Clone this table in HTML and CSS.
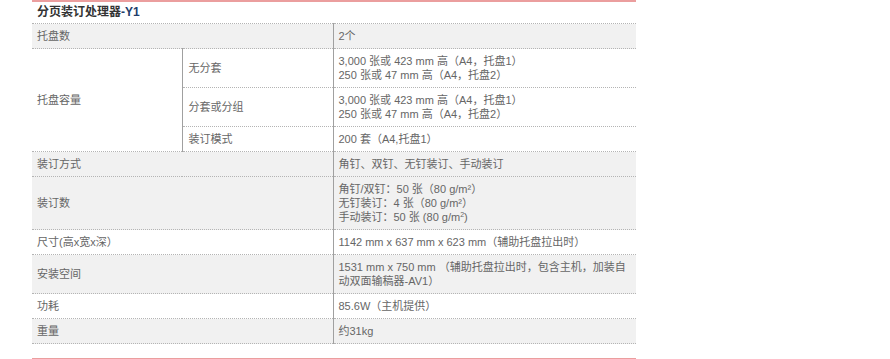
FILE: index.html
```html
<!DOCTYPE html>
<html lang="zh-CN">
<head>
<meta charset="utf-8">
<title>分页装订处理器-Y1</title>
<link rel="stylesheet" href="styles.css">
</head>
<body>
<div class="wrap">
  <table class="spec">
    <colgroup>
      <col class="c1">
      <col class="c2">
      <col class="c3">
    </colgroup>
    <tbody>
      <tr class="title-row">
        <td colspan="3" class="title">分页装订处理器<span class="model">-Y1</span></td>
      </tr>
      <tr class="alt">
        <td colspan="2">托盘数</td>
        <td class="val">2个</td>
      </tr>
      <tr>
        <td rowspan="3" class="mid">托盘容量</td>
        <td class="sub">无分套</td>
        <td class="val">3,000 张或 423 mm 高（A4，托盘1）<br>250 张或 47 mm 高（A4，托盘2）</td>
      </tr>
      <tr>
        <td class="sub">分套或分组</td>
        <td class="val">3,000 张或 423 mm 高（A4，托盘1）<br>250 张或 47 mm 高（A4，托盘2）</td>
      </tr>
      <tr>
        <td class="sub">装订模式</td>
        <td class="val">200 套（A4,托盘1）</td>
      </tr>
      <tr class="alt">
        <td colspan="2">装订方式</td>
        <td class="val">角钉、双钉、无钉装订、手动装订</td>
      </tr>
      <tr class="alt">
        <td colspan="2" class="mid">装订数</td>
        <td class="val">角钉/双钉：50 张（80 g/m²）<br>无钉装订：4 张（80 g/m²）<br>手动装订：50 张 (80 g/m<sup>2</sup>)</td>
      </tr>
      <tr>
        <td colspan="2">尺寸(高x宽x深）</td>
        <td class="val">1142 mm x 637 mm x 623 mm（辅助托盘拉出时）</td>
      </tr>
      <tr class="alt">
        <td colspan="2" class="mid">安装空间</td>
        <td class="val nowrap">1531 mm x 750 mm （辅助托盘拉出时，包含主机，加装自<br>动双面输稿器-AV1）</td>
      </tr>
      <tr>
        <td colspan="2">功耗</td>
        <td class="val">85.6W（主机提供）</td>
      </tr>
      <tr class="alt">
        <td colspan="2">重量</td>
        <td class="val">约31kg</td>
      </tr>
    </tbody>
  </table>
  <div class="redline"></div>
</div>
</body>
</html>
```
FILE: styles.css
```css
html, body {
  margin: 0;
  padding: 0;
  background: #ffffff;
}

body {
  font-family: "Liberation Sans", "Noto Sans CJK SC", sans-serif;
  font-size: 11px;
  color: #666666;
}

.wrap {
  margin-left: 32px;
  width: 604px;
}

.spec {
  width: 604px;
  border-collapse: collapse;
  table-layout: fixed;
}

.c1 { width: 150px; }
.c2 { width: 151px; }
.c3 { width: 303px; }

.spec td {
  padding: 5px 5px 5px 5px;
  line-height: 14px;
  vertical-align: middle;
  border-bottom: 1px dotted #b4b4b4;
  text-align: left;
}

.spec td.sub {
  border-left: 1px solid #a0a0a0;
  padding-left: 6px;
}

.spec td.val {
  border-left: 1px solid #a0a0a0;
  padding-left: 5px;
}

.spec td.nowrap {
  white-space: nowrap;
}

.spec tr.alt td {
  background: #f1f1f1;
}

.spec td.title {
  border-top: 2px solid #eb9e9e;
  padding-top: 3px;
  padding-bottom: 4px;
  font-size: 12px;
  font-weight: bold;
  color: #333333;
  background: #ffffff;
}

.model {
  color: #233d6b;
}

sup {
  font-size: 7px;
  line-height: 0;
  vertical-align: 4px;
}

.redline {
  margin-top: 14px;
  height: 2px;
  background: #eb9e9e;
}
```
